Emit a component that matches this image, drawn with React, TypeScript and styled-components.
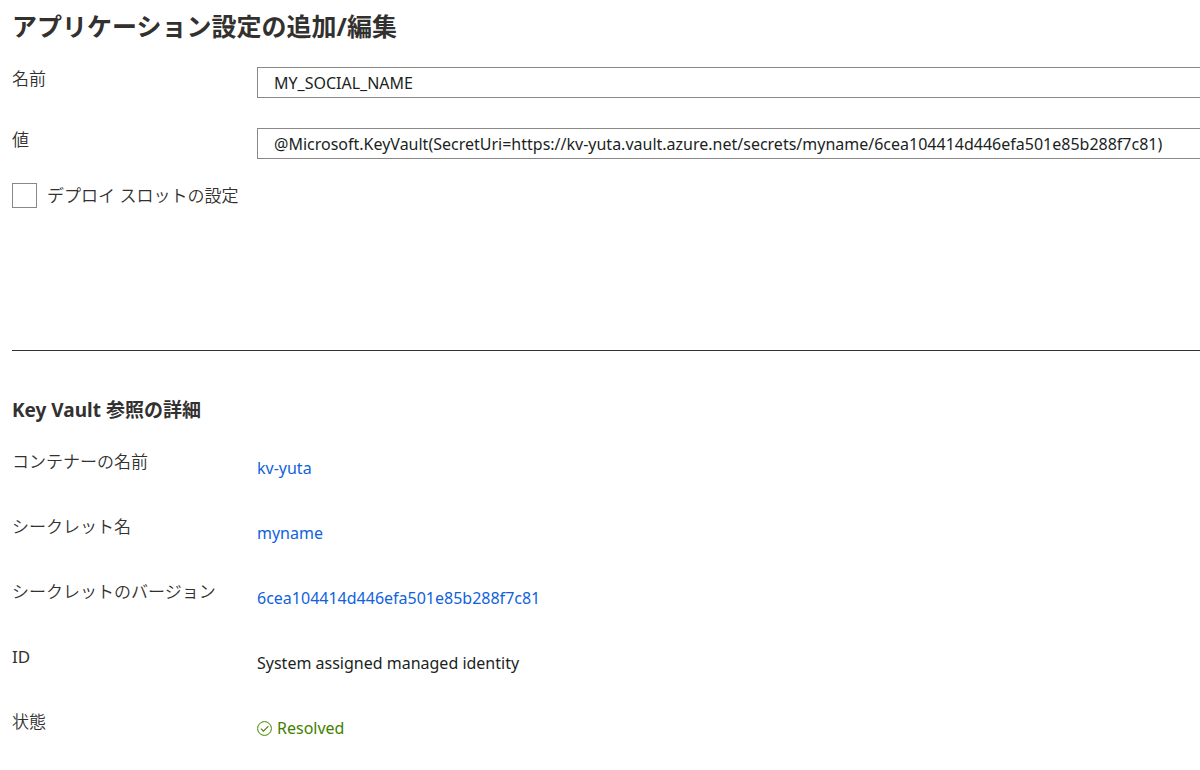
import React from "react";
import styled, { createGlobalStyle } from "styled-components";

const GlobalStyle = createGlobalStyle`
  * { box-sizing: border-box; }
  body {
    margin: 0;
    background: #fff;
    color: #323130;
    font-family: "Noto Sans", "Noto Sans CJK JP", sans-serif;
    font-size: 17px;
    line-height: 24px;
    overflow-x: hidden;
  }
`;

const Page = styled.main`
  padding: 8px 0 24px 12px;
`;

const Title = styled.h1`
  margin: 0;
  font-size: 25px;
  line-height: 36px;
  font-weight: 700;
`;

const Form = styled.form`
  display: flex;
  flex-direction: column;
  gap: 30px;
  padding-top: 23px;
  min-height: 306px;
`;

const Field = styled.div`
  display: grid;
  grid-template-columns: 245px 1fr;
  align-items: start;
`;

const Label = styled.label`
  font-weight: 350;
`;

const TextBox = styled.input`
  width: 100%;
  height: 31px;
  padding: 0 16px;
  border: 1px solid #8a8886;
  border-right: 0;
  border-radius: 0;
  background: #fff;
  color: #201f1e;
  font-family: inherit;
  font-size: 16px;
  outline: none;
`;

const CheckRow = styled.div`
  display: flex;
  align-items: center;
  gap: 10px;
  margin-top: -6px;
`;

const CheckBox = styled.input`
  appearance: none;
  width: 25px;
  height: 25px;
  margin: 0;
  border: 1px solid #8a8886;
  background: #fff;
  &:checked { background: #1062dc; }
`;

const Divider = styled.hr`
  margin: 0;
  border: 0;
  border-top: 1px solid #323130;
`;

const Subtitle = styled.h2`
  margin: 0;
  padding-top: 45px;
  font-size: 19px;
  line-height: 28px;
  font-weight: 700;
`;

const Details = styled.dl`
  margin: 0;
  padding-top: 26px;
`;

const Detail = styled.div`
  display: grid;
  grid-template-columns: 245px 1fr;
  min-height: 65px;
`;

const Term = styled.dt<{ $latin?: boolean }>`
  font-weight: ${({ $latin }) => ($latin ? 400 : 350)};
`;

const Value = styled.dd`
  margin: 0;
  padding-top: 6px;
  font-size: 16px;
  color: #201f1e;
`;

const ValueLink = styled.a`
  color: #1062dc;
  text-decoration: none;
`;

const Status = styled.span`
  display: flex;
  align-items: center;
  gap: 5px;
  color: #428000;
`;

const ResolvedIcon = () => (
  <svg width="15" height="15" viewBox="0 0 15 15" fill="none" stroke="currentColor" aria-hidden="true">
    <circle cx="7.5" cy="7.5" r="6.9" />
    <path d="M3.9 7.6 6.4 10.1 11.4 5.1" strokeWidth="1.1" />
  </svg>
);

const SECRET_VERSION = "6cea104414d446efa501e85b288f7c81";

export default function App() {
  return (
    <>
      <GlobalStyle />
      <Page>
        <Title>アプリケーション設定の追加/編集</Title>
        <Form>
          <Field>
            <Label htmlFor="name">名前</Label>
            <TextBox id="name" type="text" defaultValue="MY_SOCIAL_NAME" />
          </Field>
          <Field>
            <Label htmlFor="value">値</Label>
            <TextBox
              id="value"
              type="text"
              defaultValue={`@Microsoft.KeyVault(SecretUri=https://kv-yuta.vault.azure.net/secrets/myname/${SECRET_VERSION})`}
            />
          </Field>
          <CheckRow>
            <CheckBox id="slot" type="checkbox" />
            <Label htmlFor="slot">デプロイ スロットの設定</Label>
          </CheckRow>
        </Form>
        <Divider />
        <Subtitle>Key Vault 参照の詳細</Subtitle>
        <Details>
          <Detail>
            <Term>コンテナーの名前</Term>
            <Value><ValueLink href="#vault">kv-yuta</ValueLink></Value>
          </Detail>
          <Detail>
            <Term>シークレット名</Term>
            <Value><ValueLink href="#secret">myname</ValueLink></Value>
          </Detail>
          <Detail>
            <Term>シークレットのバージョン</Term>
            <Value><ValueLink href="#version">{SECRET_VERSION}</ValueLink></Value>
          </Detail>
          <Detail>
            <Term $latin>ID</Term>
            <Value>System assigned managed identity</Value>
          </Detail>
          <Detail>
            <Term>状態</Term>
            <Value><Status><ResolvedIcon />Resolved</Status></Value>
          </Detail>
        </Details>
      </Page>
    </>
  );
}
